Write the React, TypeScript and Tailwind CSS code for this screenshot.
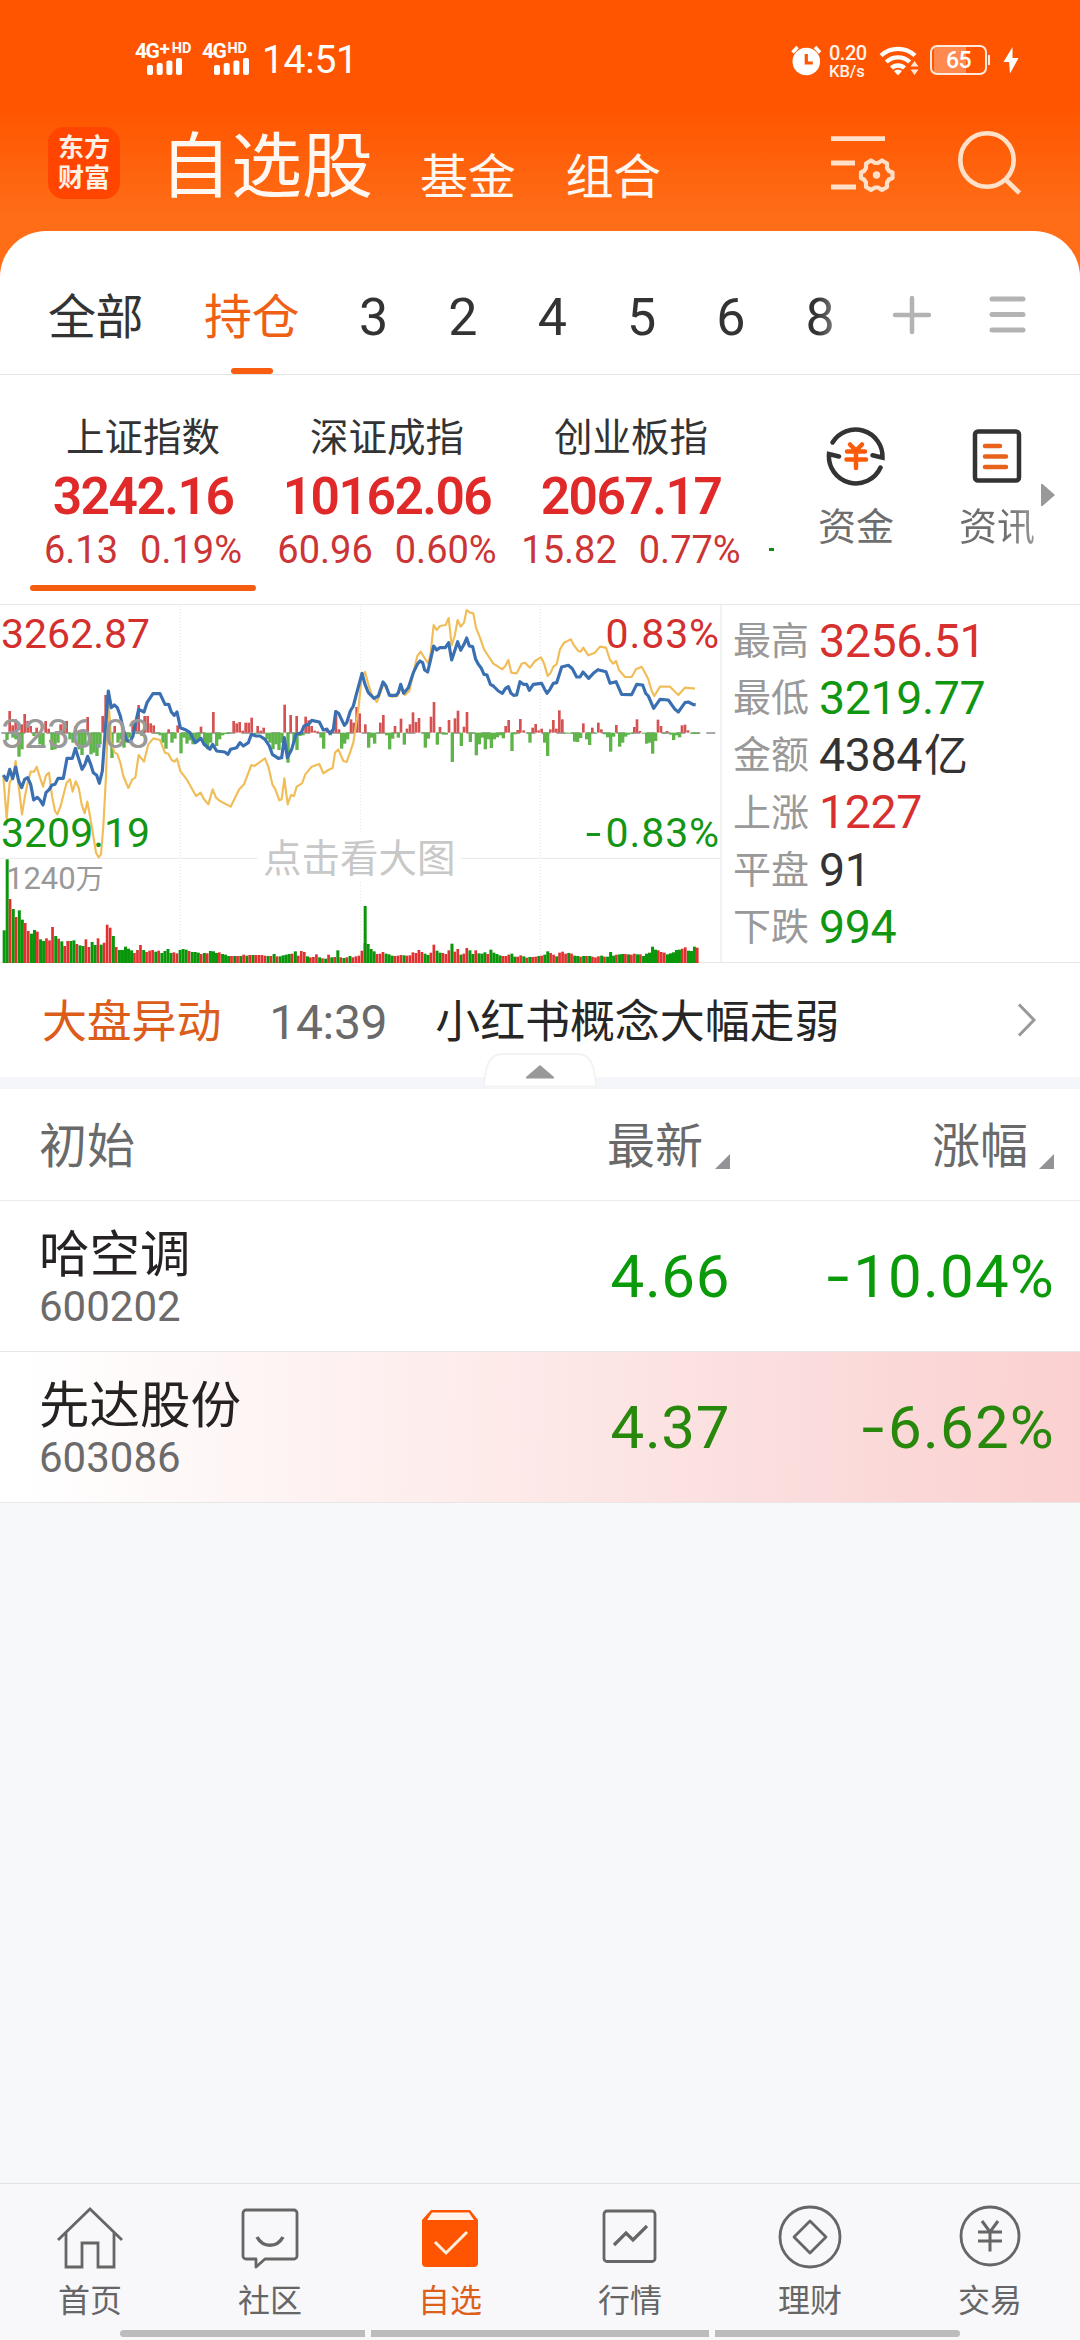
import React from "react";

type Pt = [number, number];

// Intraday chart space: 9 units per minute, price axis crosses at y = 410, volume base at y = 1101.
const INDEX_LINE: Pt[] = [
  [10, 537], [20, 553], [29, 520], [38, 548], [47, 513], [56, 555], [65, 575], [74, 550], [83, 545], [92, 565], [101, 612], [112, 604], [120, 612], [129, 627], [138, 590], [148, 580], [155, 568], [165, 565], [174, 547], [190, 547], [201, 487], [217, 487], [226, 457], [235, 485], [246, 520], [255, 505], [263, 481], [272, 505], [280, 530], [290, 538], [298, 562], [307, 525], [316, 400], [325, 285], [334, 335], [343, 327], [352, 335], [361, 360], [370, 400], [379, 432], [390, 437], [399, 420], [408, 375], [416, 340], [432, 348], [441, 320], [459, 293], [480, 293], [495, 325], [506, 325], [514, 348], [523, 358], [531, 348], [541, 395], [558, 402], [570, 410], [586, 440], [603, 427], [612, 445], [630, 460], [638, 445], [650, 465], [674, 468], [684, 475], [692, 460], [710, 455], [720, 440], [730, 450], [745, 440], [754, 415], [768, 420], [780, 420], [795, 430], [808, 450], [817, 475], [835, 487], [845, 485], [853, 425], [862, 485], [875, 460], [888, 415], [904, 410], [912, 390], [926, 385], [935, 373], [958, 378], [970, 402], [980, 400], [990, 412], [1000, 400], [1007, 347], [1016, 352], [1033, 388], [1040, 380], [1051, 345], [1060, 330], [1069, 295], [1086, 232],
  [1095, 265], [1105, 290], [1122, 307], [1135, 300], [1149, 258], [1158, 270], [1168, 298], [1188, 298], [1195, 290], [1202, 265], [1211, 292], [1225, 275], [1240, 230], [1252, 205], [1260, 195], [1268, 200], [1274, 222], [1283, 228], [1292, 190], [1301, 150], [1310, 162], [1320, 155], [1336, 155], [1346, 140], [1355, 192], [1364, 165], [1373, 137], [1382, 163], [1392, 145], [1400, 126], [1408, 150], [1418, 152], [1427, 190], [1435, 205], [1443, 215], [1452, 235], [1461, 237], [1471, 265], [1480, 270], [1495, 285], [1507, 292], [1516, 278], [1525, 272], [1533, 292], [1541, 298], [1550, 297], [1560, 257], [1570, 265], [1580, 265], [1588, 283], [1600, 265], [1625, 262], [1633, 278], [1641, 292], [1650, 280], [1660, 262], [1670, 260], [1685, 213], [1705, 208], [1717, 218], [1730, 243], [1740, 243], [1749, 228], [1766, 247], [1780, 232], [1794, 221], [1818, 227], [1830, 262], [1848, 257], [1865, 295], [1895, 296], [1910, 265], [1928, 267], [1937, 292], [1945, 300], [1961, 337], [1980, 310], [2005, 312], [2025, 340], [2035, 348], [2055, 320], [2065, 318], [2080, 326], [2087, 326],
];

const AVERAGE_LINE: Pt[] = [
  [10, 540], [20, 668], [29, 560], [38, 545], [47, 495], [56, 570], [66, 655], [75, 600], [83, 560], [92, 527], [103, 527], [110, 512], [120, 545], [129, 572], [138, 538], [147, 530], [156, 600], [165, 645], [172, 655], [182, 630], [192, 590], [200, 560], [210, 550], [218, 587], [227, 556], [236, 575], [245, 625], [254, 652], [262, 617], [270, 660], [280, 720], [288, 770], [296, 784], [303, 775], [310, 690], [318, 540], [325, 310], [334, 440], [343, 468], [352, 475], [361, 500], [370, 540], [385, 576], [397, 550], [406, 545], [416, 477], [432, 497], [445, 445], [460, 427], [480, 432], [495, 470], [505, 473], [515, 492], [523, 497], [531, 488], [541, 525], [560, 550], [588, 600], [602, 590], [612, 610], [625, 625], [638, 580], [648, 605], [660, 615], [692, 632], [705, 605], [718, 580], [732, 565], [754, 507], [763, 510], [795, 487], [806, 515], [817, 565], [826, 580], [838, 613], [845, 610], [853, 547], [863, 625], [873, 597], [882, 600], [890, 572], [906, 562], [916, 535], [935, 512], [958, 504], [970, 532], [985, 522], [998, 516], [1005, 470], [1015, 460], [1030, 495], [1040, 498], [1050, 470], [1060, 440], [1075, 340], [1085, 245],
  [1095, 228], [1105, 265], [1115, 295], [1130, 318], [1138, 300], [1152, 262], [1160, 280], [1175, 303], [1193, 300], [1202, 275], [1215, 297], [1228, 285], [1240, 230], [1252, 180], [1262, 167], [1270, 180], [1285, 203], [1292, 170], [1301, 87], [1310, 102], [1320, 90], [1337, 87], [1346, 66], [1355, 148], [1364, 120], [1373, 72], [1382, 92], [1392, 80], [1400, 42], [1410, 50], [1420, 52], [1428, 95], [1440, 125], [1452, 160], [1465, 180], [1480, 203], [1507, 220], [1516, 210], [1525, 192], [1534, 230], [1550, 232], [1565, 203], [1575, 200], [1590, 215], [1605, 195], [1623, 184], [1633, 205], [1643, 240], [1652, 230], [1660, 212], [1670, 205], [1680, 160], [1692, 140], [1713, 130], [1720, 145], [1735, 165], [1742, 167], [1750, 155], [1765, 178], [1785, 170], [1800, 152], [1818, 155], [1830, 192], [1840, 203], [1848, 195], [1857, 222], [1875, 243], [1895, 243], [1908, 220], [1925, 212], [1935, 230], [1945, 250], [1955, 285], [1963, 300], [1980, 272], [2010, 272], [2035, 297], [2055, 275], [2085, 278],
];

// [x, end y]; above 410 is buying pressure, below is selling pressure.
const FORCE: Pt[] = [
  [19, 432], [28, 345], [37, 425], [37, 388], [46, 370], [46, 430], [55, 482], [64, 460], [64, 385], [73, 354], [82, 375], [91, 390], [100, 420], [109, 395], [118, 445], [127, 450], [136, 375], [145, 398], [154, 462], [163, 460], [172, 440], [181, 385], [190, 380], [199, 375], [208, 430], [217, 440], [226, 390], [235, 460], [244, 477], [253, 450], [262, 363], [271, 475], [280, 470], [289, 480], [298, 445], [307, 360], [316, 297], [325, 300], [334, 486], [343, 390], [352, 440], [361, 430], [370, 455], [379, 440], [388, 425], [397, 375], [406, 375], [415, 327], [424, 420], [433, 360], [442, 360], [451, 382], [460, 388], [469, 413], [478, 418], [487, 440], [496, 458], [505, 400], [514, 440], [523, 428], [532, 388], [541, 472], [550, 425], [559, 443], [568, 433], [577, 445], [586, 440], [595, 432], [602, 392], [612, 450], [621, 460], [630, 440], [639, 348], [648, 450], [657, 430], [666, 418], [675, 414], [684, 414],
  [700, 375], [709, 382], [718, 378], [727, 404], [736, 380], [745, 380], [754, 365], [763, 415], [772, 390], [781, 404], [790, 395], [799, 430], [808, 440], [817, 460], [826, 445], [835, 462], [844, 440], [853, 326], [862, 500], [871, 357], [880, 440], [889, 360], [889, 462], [898, 420], [907, 418], [916, 362], [925, 373], [934, 390], [943, 404], [952, 406], [961, 425], [969, 458], [980, 395], [989, 418], [998, 400], [1007, 343], [1016, 400], [1023, 458], [1032, 443], [1041, 430], [1052, 370], [1060, 380], [1069, 333], [1078, 352], [1095, 385], [1104, 455], [1113, 425], [1122, 443], [1131, 412],
  [1140, 380], [1149, 357], [1158, 418], [1167, 460], [1176, 428], [1184, 390], [1193, 425], [1202, 368], [1211, 446], [1220, 398], [1229, 385], [1238, 349], [1247, 378], [1256, 366], [1265, 412], [1274, 455], [1283, 428], [1292, 362], [1301, 318], [1310, 446], [1319, 393], [1328, 416], [1337, 416], [1346, 372], [1355, 498], [1364, 367], [1373, 344], [1382, 450], [1391, 392], [1400, 348], [1409, 438], [1418, 412], [1427, 478], [1436, 445], [1445, 425], [1454, 460], [1463, 430], [1472, 456], [1481, 430], [1490, 424], [1499, 418], [1508, 427], [1516, 390], [1525, 372], [1534, 465], [1543, 415], [1552, 402], [1560, 369], [1570, 403], [1579, 412], [1588, 440], [1597, 395], [1606, 384], [1615, 403], [1624, 398], [1632, 440], [1641, 480], [1650, 400], [1659, 372], [1668, 398], [1677, 343], [1686, 370], [1695, 413], [1704, 413], [1713, 413], [1722, 437], [1731, 438], [1740, 426], [1749, 382], [1758, 430], [1767, 447], [1776, 395], [1785, 413], [1794, 380], [1803, 400], [1812, 415], [1821, 424], [1830, 467], [1839, 422], [1848, 387], [1857, 452], [1866, 440], [1875, 422], [1884, 416], [1893, 413], [1902, 393], [1910, 370], [1919, 405], [1928, 413], [1938, 443], [1947, 440], [1956, 473], [1965, 435], [1973, 371], [1982, 390], [1991, 413], [2000, 405], [2010, 416], [2019, 432], [2028, 418], [2037, 424], [2045, 388], [2054, 386], [2063, 403], [2072, 413], [2081, 414], [2090, 414],
];

// One entry per minute: r/g is the candle direction, the number is the bar height.
const VOLUME_MORNING =
  "g98 g311 r192 g162 r138 g158 g130 r120 r96 g88 g99 r94 g71 g66 r74 r68 r108 g81 r73 g65 r51 r66 g66 g68 r57 g53 g51 r71 r48 g63 g54 r74 g55 r61 r115 r106 g81 r48 g39 g39 g49 g43 g38 r30 r39 r54 g39 r33 r37 r39 g34 r37 g30 g36 g42 g30 r32 r29 g39 g42 g40 r36 g33 g33 g31 r27 g30 r29 g36 g35 g30 r32 g27 g25 g21 r21 g21 r21 g21 r25 g22 r24 g24 r24 r24 r24 r22 g21 r21 g27 r20 g20 g23 g25 g27 r28 g35 r22 r36 r33 g20 r17 r18 r26 g17 r14 g13 r25 g17 r18 g38 r17 g15 r17 g21 r17 r20 r22 r37 r60";

const VOLUME_AFTERNOON =
  "g171 g57 g42 g35 r27 r28 r33 g28 g26 g22 r21 r22 r24 g23 r22 r23 r32 r30 r39 r33 g28 g24 r31 r55 g37 g31 r30 r27 r38 g58 r34 r42 g25 r28 r45 g38 g27 r38 g29 g28 g32 r27 g40 g31 g27 g23 r21 r21 r25 g28 g19 r19 r23 g20 r16 g18 r18 r19 g21 r22 g25 g35 r30 r25 g20 r31 r34 r28 g30 r28 g22 g21 r19 g21 r21 g21 r19 r17 r20 g22 r19 g19 g33 g22 r25 g26 g27 r27 g26 r25 r28 g26 r26 g21 g28 g31 g49 g40 r38 r33 r31 g26 g29 g32 g39 g40 r43 r47 g37 g36 g49 r46";

const volumeBars = (data: string, start: number, step: number) =>
  data.split(" ").map((b, i) => ({ up: b[0] === "r", h: Number(b.slice(1)), x: start + i * step }));

const BARS = [...volumeBars(VOLUME_MORNING, 8, 9.1), ...volumeBars(VOLUME_AFTERNOON, 1091, 8.98)];

const toPoints = (p: Pt[]) => p.map(([x, y]) => `${x},${y}`).join(" ");

function Minus({ className }: { className: string }) {
  return <span className={`inline-block origin-right scale-x-[1.35] ${className}`}>-</span>;
}

function IntradayChart() {
  return (
    <div className="relative h-[358px] w-[720px] shrink-0">
      <svg className="block h-[358px] w-[720px]" viewBox="0 27 2160 1074">
        {[541, 1081, 1621].map((x) => (
          <line key={x} x1={x} x2={x} y1="30" y2="1101" stroke="#e2e2e2" strokeWidth="3" strokeDasharray="3 6" />
        ))}
        <line x1="0" x2="772" y1="787" y2="787" stroke="#e8e8e8" strokeWidth="3" />
        <line x1="1382" x2="2160" y1="787" y2="787" stroke="#e8e8e8" strokeWidth="3" />
        <rect x="780" y="712" width="590" height="145" fill="#fff" />
        {BARS.map((b, i) => (
          <rect key={i} x={b.x} y={1101 - b.h} width={b.up ? 8 : 9} height={b.h} fill={b.up ? "#e03030" : "#0a960a"} />
        ))}
        <line x1="4" x2="2160" y1="411" y2="411" stroke="#8c8c8c" strokeWidth="5" strokeDasharray="27 18" />
        {FORCE.map(([x, y], i) => (
          <rect
            key={i}
            x={x - 3}
            y={Math.min(y, 410)}
            width={y < 410 ? 8 : 10}
            height={Math.abs(y - 410)}
            fill={y < 410 ? "#d65252" : "#5fb44a"}
          />
        ))}
        <polyline points={toPoints(AVERAGE_LINE)} fill="none" stroke="#f0bd58" strokeWidth="6.5" strokeLinejoin="round" />
        <polyline points={toPoints(INDEX_LINE)} fill="none" stroke="#3a70b2" strokeWidth="9.5" strokeLinejoin="round" />
      </svg>
      <div className="absolute inset-0 text-[41px] leading-[40px]">
        <span className="absolute left-px top-[9px] text-[#d32f2f]">3262.87</span>
        <span className="absolute left-px top-[109px] text-[#999]">3236.03</span>
        <span className="absolute left-px top-[208px] text-[#149614]">3209.19</span>
        <span className="absolute right-0 top-[9px] tracking-[0.9px] text-[#d32f2f]">0.83%</span>
        <span className="absolute right-0 top-[208px] tracking-[0.9px] text-[#149614]">
          <Minus className="mr-[3px]" />
          0.83%
        </span>
        <span className="absolute left-[6px] top-[254px] text-[31px] text-[#999]">
          1240<span className="text-[28px]">万</span>
        </span>
        <span className="absolute left-[263px] top-[234px] text-[38.5px] text-[#c8c8c8]">点击看大图</span>
      </div>
    </div>
  );
}

function SignalBars() {
  return (
    <svg className="ml-[12px] mt-[-2px] block" width="36" height="17" viewBox="0 0 36 17" fill="#fff">
      <rect x="0" y="7" width="6" height="10" rx="2" />
      <rect x="9.7" y="5" width="6" height="12" rx="2" />
      <rect x="19.4" y="2.5" width="6" height="14.5" rx="2" />
      <rect x="29" y="0" width="6" height="17" rx="2" />
    </svg>
  );
}

function StatusBar() {
  return (
    <div className="flex h-[104px] items-start pt-[40px] text-white">
      <div className="ml-[135px] w-[67px]">
        <div className="flex h-[20px] items-start font-bold leading-[22px]">
          <span className="text-[21px] tracking-[-1.5px]">4G</span>
          <span className="ml-px text-[19px] leading-[18px]">+</span>
          <span className="ml-[2px] text-[14.5px] leading-[18px]">HD</span>
        </div>
        <SignalBars />
      </div>
      <div className="w-[60px]">
        <div className="flex h-[20px] items-start font-bold leading-[22px]">
          <span className="text-[21px] tracking-[-1.5px]">4G</span>
          <span className="ml-[2px] text-[14.5px] leading-[18px]">HD</span>
        </div>
        <SignalBars />
      </div>
      <span className="text-[39px] leading-[41px] tracking-[-0.3px]">14:51</span>
      <svg className="ml-auto mt-[4px]" width="31" height="32" viewBox="0 0 31 32">
        <circle cx="15.3" cy="17.5" r="13.8" fill="#fff" />
        <path d="M1.5 8.5 6.5 3M29 8.5 24 3" stroke="#fff" strokeWidth="3.4" />
        <path d="M15.3 10v9h6.5" fill="none" stroke="#ff5500" strokeWidth="3.2" />
      </svg>
      <div className="ml-[7px] mt-[3px] flex w-[50px] flex-col font-medium text-[#fff3ea]">
        <span className="text-[20px] leading-[20px] tracking-[-0.5px]">0.20</span>
        <span className="pt-[1px] text-[16.5px] leading-[15px]">KB/s</span>
      </div>
      <svg className="mt-[5px]" width="40" height="31" viewBox="0 0 40 31" fill="none" stroke="#fff" strokeWidth="4.4">
        <path d="M2 10.5a25 25 0 0 1 34 0" />
        <path d="M7.3 17a17 17 0 0 1 23.4 0" />
        <path d="M12.5 23a9.5 9.5 0 0 1 13 0" />
        <path d="M19 30.500l-4-4.500a6 6 0 0 1 8 0z" fill="#fff" stroke="none" />
        <path d="m35.500 16 4 5.500h-8zM35.500 30l4-5.500h-8z" fill="#ffe6d6" stroke="none" />
      </svg>
      <div className="ml-[11px] mt-[5px] flex h-[30px] w-[57px] items-center justify-center rounded-[7px] border-[2.5px] border-[#ffeadd] bg-[linear-gradient(90deg,transparent_2px,#ff8a50_2px,#ff8a50_34px,transparent_34px)] bg-origin-padding text-[23px] font-medium leading-none tracking-[-0.5px]">
        65
      </div>
      <i className="ml-px mt-[15px] h-[10px] w-[2px] bg-[#ffeadd]" />
      <svg className="ml-[13px] mr-[61px] mt-[7px]" width="16" height="27" viewBox="0 0 16 27" fill="#fff">
        <path d="M9.500 0 .5 15h5.500L7 26.500 15.500 11H9.500z" />
      </svg>
    </div>
  );
}

function TitleBar() {
  return (
    <div className="flex h-[127px] items-start text-[#fff8f2]">
      <div className="ml-[48px] mt-[23px] flex h-[72px] w-[72px] flex-col items-center rounded-[16px] bg-[#ff4500] pt-[6px] text-[26px] font-bold leading-[30px] text-[#fff0e6]">
        <span>东方</span>
        <span>财富</span>
      </div>
      <span className="ml-[40px] mt-[27px] w-[213px] text-[71px] leading-[72px]">自选股</span>
      <span className="ml-[47px] mt-[44px] text-[48px] leading-[60px] tracking-[-0.3px]">基金</span>
      <span className="ml-[50px] mt-[44px] text-[48px] leading-[60px] tracking-[-0.3px]">组合</span>
      <svg className="ml-[170px] mt-[30px]" width="64" height="66" viewBox="0 0 64 66" fill="none" stroke="#ffe0c8" strokeWidth="4.800">
        <path d="M0 4.700h54M0 29h24M0 53h25" />
        <path
          strokeLinejoin="round"
          strokeWidth="4.200"
          d="M40 26.500l4 2.500h3l4-2.500 5 3 0 4.500 2 3 3.500 1.500v5.500l-3.500 1.500-2 3 0 4.500-5 3-4-2.500h-3l-4 2.500-5-3 0-4.500-2-3-3-1.500v-5.500l3-1.500 2-3 0-4.500z"
        />
        <circle cx="45.500" cy="41" r="3.700" fill="#ffe0c8" stroke="none" />
      </svg>
      <svg className="ml-[63px] mt-[26px]" width="64" height="66" viewBox="0 0 64 66" fill="none" stroke="#ffe0c8" strokeWidth="4.600">
        <circle cx="29" cy="30" r="26.700" />
        <path d="m47 49 14.500 14" />
      </svg>
    </div>
  );
}

const GROUPS = ["3", "2", "4", "5", "6"];

function GroupTabs() {
  return (
    <div className="flex h-[144px] border-b border-[#e3e3e3] pt-[55px] text-[48px] leading-[64px] text-[#333]">
      <span className="ml-[48px] tracking-[-0.5px]">全部</span>
      <div className="ml-[61px] flex flex-col items-center text-[#ef6014]">
        <span className="tracking-[-0.5px]">持仓</span>
        <i className="mt-auto h-[6px] w-[42px] rounded-full bg-[#f95d0f]" />
      </div>
      <div className="ml-[30px] flex text-[52px]">
        {GROUPS.map((g) => (
          <span key={g} className="w-[89.3px] text-center">{g}</span>
        ))}
        <span className="w-[89px] text-center">
          <span className="bg-linear-to-r from-[#333] from-40% to-[#808080] bg-clip-text text-transparent">8</span>
        </span>
      </div>
      <svg className="ml-[27px] mt-[7px]" width="40" height="44" viewBox="0 0 40 44" stroke="#b3b3b3" strokeWidth="4.500" strokeLinecap="round">
        <path d="M3 22h34M20 5v34" />
      </svg>
      <svg className="ml-[57px] mt-[7px]" width="38" height="44" viewBox="0 0 38 44" stroke="#b3b3b3" strokeWidth="5" strokeLinecap="round">
        <path d="M3 6h31M3 21.500h31M3 37h31" />
      </svg>
    </div>
  );
}

const INDICES = [
  { name: "上证指数", value: "3242.16", diff: "6.13", pct: "0.19%", active: true },
  { name: "深证成指", value: "10162.06", diff: "60.96", pct: "0.60%", active: false },
  { name: "创业板指", value: "2067.17", diff: "15.82", pct: "0.77%", active: false },
];

function IndexStrip() {
  return (
    <div className="flex h-[229px] pt-[36px]">
      <div className="ml-[21px] flex">
        {INDICES.map((it) => (
          <div key={it.name} className="flex w-[244px] flex-col items-center whitespace-nowrap">
            <span className="text-[38.5px] leading-[54px] text-[#333]">{it.name}</span>
            <span className="mt-[5px] text-[51.5px] font-semibold leading-[54px] tracking-[-1.5px] text-[#e02a2a]">{it.value}</span>
            <span className="mt-[6px] flex gap-[22px] text-[38px] leading-[40px] text-[#cc3535]">
              <span>{it.diff}</span>
              <span>{it.pct}</span>
            </span>
            {it.active && <i className="mt-[15px] h-[6px] w-[226px] rounded-full bg-[#f45d10]" />}
          </div>
        ))}
      </div>
      <i className="ml-[16px] mt-[137px] h-[3px] w-[5px] bg-[#14891a]" />
      <div className="ml-[43px] flex w-[78px] flex-col items-center">
        <svg className="mt-[14px]" width="62" height="62" viewBox="0 0 62 62" fill="none" stroke="#333" strokeWidth="4.500">
          <path d="M7.500 17.500a27 27 0 0 1 50 15.200l-10-2.500" strokeLinecap="round" strokeLinejoin="miter" />
          <path d="M55.500 42.500A27 27 0 0 1 4 29l10 2.500" strokeLinecap="round" />
          <path d="m25 19.500 6 6 6-6M22 26.500h18M21.500 34.500h19.500M31 27v16" stroke="#fb5a0a" strokeLinecap="round" />
        </svg>
        <span className="mt-[15px] text-[38px] leading-[50px] text-[#6e6e6e]">资金</span>
      </div>
      <div className="ml-[63px] flex w-[78px] flex-col items-center">
        <svg className="mt-[14px]" width="62" height="62" viewBox="0 0 62 62" fill="none" stroke="#333" strokeWidth="4.500">
          <rect x="9" y="6.500" width="44" height="49" rx="3" />
          <path d="M19 21h15M19 31.500h21M19 42h21" stroke="#e8621c" strokeLinecap="round" />
        </svg>
        <span className="mt-[15px] bg-linear-to-r from-[#6e6e6e] from-60% to-[#999] bg-clip-text text-[38px] leading-[50px] text-transparent">资讯</span>
      </div>
      <svg className="ml-[5px] mt-[73px] shrink-0" width="15" height="22" viewBox="0 0 15 22" fill="#999">
        <path d="M0 0h1.500L14 11 1.500 22H0z" />
      </svg>
    </div>
  );
}

const STATS = [
  { label: "最高", value: "3256.51", tone: "text-[#d82f2f]" },
  { label: "最低", value: "3219.77", tone: "text-[#109610]" },
  { label: "金额", value: "4384", unit: "亿", tone: "text-[#333]" },
  { label: "上涨", value: "1227", tone: "text-[#d82f2f]" },
  { label: "平盘", value: "91", tone: "text-[#333]" },
  { label: "下跌", value: "994", tone: "text-[#109610]" },
];

function Stats() {
  return (
    <div className="flex flex-1 flex-col border-l-2 border-[#f2f2f2] pl-[11px] pt-[7.500px]">
      {STATS.map((s) => (
        <div key={s.label} className="flex h-[57.2px] items-center">
          <span className="w-[86px] text-[38px] leading-none text-[#999]">{s.label}</span>
          <span className={`text-[46.5px] leading-none tracking-[-0.4px] ${s.tone}`}>
            {s.value}
            {s.unit && <span className="ml-[2px] text-[44px]">{s.unit}</span>}
          </span>
        </div>
      ))}
    </div>
  );
}

function NewsRow() {
  return (
    <div className="flex h-[114px] pt-[30px] text-[45px] leading-[60px]">
      <span className="ml-[42px] tracking-[-0.2px] text-[#dc5c1a]">大盘异动</span>
      <span className="ml-[48px] text-[48px] tracking-[-0.3px] text-[#6a6a6a]">14:39</span>
      <span className="ml-[48px] tracking-[-0.1px] text-[#262626]">小红书概念大幅走弱</span>
      <svg className="ml-auto mr-[43px] mt-[10px]" width="20" height="34" viewBox="0 0 20 34" fill="none" stroke="#999" strokeWidth="3">
        <path d="m2 1.500 15 15.500L2 32.500" />
      </svg>
    </div>
  );
}

function CollapseStrip() {
  return (
    <div className="relative h-[12px] bg-[#f5f6fa]">
      <svg className="absolute left-[483px] top-[-24px]" width="114" height="36" viewBox="0 0 114 36">
        <path d="M1 33.500C2 22 3 12 8 6c3-4 7-5 12-5h74c5 0 9 1 12 5 5 6 6 16 7 27.500z" fill="#fff" stroke="#f3f3f3" strokeWidth="2" />
        <path d="M57 12 71 24v1.500H43V24z" fill="#999" />
      </svg>
    </div>
  );
}

function SortMark() {
  return (
    <svg className="mt-[35px]" width="15" height="15" viewBox="0 0 15 15" fill="#939397">
      <path d="M15 0v15H0z" />
    </svg>
  );
}

function ListHeader() {
  return (
    <div className="flex h-[112px] border-b border-[#ebebeb] pt-[30px] text-[48px] leading-[56px] text-[#6a6a6a]">
      <span className="ml-[39px] w-[568px]">初始</span>
      <span className="w-[108px]">最新</span>
      <SortMark />
      <span className="ml-[202px] w-[107px]">涨幅</span>
      <SortMark />
    </div>
  );
}

const STOCKS = [
  { name: "哈空调", code: "600202", price: "4.66", change: "10.04%", row: "bg-white", tone: "text-[#0a9a0a]" },
  {
    name: "先达股份",
    code: "603086",
    price: "4.37",
    change: "6.62%",
    row: "bg-[linear-gradient(91deg,#fff_2%,#fdebea_45%,#fbdcdc_75%,#fbd0d0_100%)]",
    tone: "text-[#27880c]",
  },
];

function StockRow({ stock }: { stock: (typeof STOCKS)[number] }) {
  return (
    <div className={`flex h-[151px] border-b border-[#ebe6e6] ${stock.row}`}>
      <div className="ml-[39px] flex w-[400px] flex-col pt-[24px]">
        <span className="text-[50.5px] leading-[60px] text-[#262222]">{stock.name}</span>
        <span className="mt-[2px] text-[42px] leading-[40px] text-[#6c6a6a]">{stock.code}</span>
      </div>
      <span className={`w-[291px] pt-[46px] text-right text-[60px] leading-[60px] tracking-[0.6px] ${stock.tone}`}>{stock.price}</span>
      <span className={`ml-auto mr-[25px] pt-[46px] text-[60px] leading-[60px] tracking-[1.2px] ${stock.tone}`}>
        <Minus className="mr-[2px]" />
        {stock.change}
      </span>
    </div>
  );
}

const NAV = [
  {
    label: "首页",
    icon: <path d="M4 35 36 4l32 31M12 28v34h16V38h16v24h16V28" />,
  },
  {
    label: "社区",
    icon: (
      <>
        <path d="M12 5h48a3 3 0 0 1 3 3v43a3 3 0 0 1-3 3H31l-9 8v-8H12a3 3 0 0 1-3-3V8a3 3 0 0 1 3-3z" strokeLinejoin="round" />
        <path d="M23 32c6 11 20 11 26 0" strokeWidth="3.500" />
      </>
    ),
  },
  {
    label: "自选",
    active: true,
    icon: (
      <>
        <path d="M17 5h39l8 10v43a4 4 0 0 1-4 4H12a4 4 0 0 1-4-4V15z" fill="#ff5500" stroke="none" />
        <path d="M18 7.500h37l5 7.500H13z" fill="#fff3ea" stroke="none" />
        <path d="m21 37 11 11 21-21" stroke="#ffeedd" strokeWidth="3" />
      </>
    ),
  },
  {
    label: "行情",
    icon: (
      <>
        <rect x="10" y="6" width="51" height="50.500" rx="3" />
        <path d="m20 40 12-12 7 7 14-14" strokeWidth="3.200" />
      </>
    ),
  },
  {
    label: "理财",
    icon: (
      <>
        <circle cx="36" cy="32" r="30" />
        <path d="m36 16 16 16-16 16-16-16z" strokeLinejoin="round" />
      </>
    ),
  },
  {
    label: "交易",
    icon: (
      <>
        <circle cx="36" cy="31" r="29" />
        <path d="m28 16 8 11 8-11M24 27h24M24 36h24M36 27v19.500" strokeWidth="3" />
      </>
    ),
  },
];

function BottomNav() {
  return (
    <div className="relative flex h-[157px] border-t border-[#e3e3e3] bg-[#f8f8fb]">
      {NAV.map((n) => (
        <div key={n.label} className="flex w-[180px] flex-col items-center pt-[21px]">
          <svg width="72" height="68" viewBox="0 0 72 68" fill="none" stroke="#666" strokeWidth="2.800">
            {n.icon}
          </svg>
          <span className={`mt-[8px] text-[32px] leading-[40px] ${n.active ? "text-[#dd5f1c]" : "text-[#666]"}`}>{n.label}</span>
        </div>
      ))}
      <div className="absolute bottom-[3px] left-[120px] flex h-[7px] gap-[6px]">
        <i className="w-[245px] rounded-l-full bg-[#bcbcbc]" />
        <i className="w-[338px] bg-[#bcbcbc]" />
        <i className="w-[245px] rounded-r-full bg-[#bcbcbc]" />
      </div>
    </div>
  );
}

export default function App() {
  return (
    <div className="relative flex h-[2340px] w-[1080px] flex-col overflow-hidden bg-[#f7f8fa] font-[Roboto,'Noto_Sans_CJK_SC',sans-serif]">
      <div className="bg-[linear-gradient(180deg,#ff5500_108px,#ff6d17_215px,#ff6d17_300px)]">
        <StatusBar />
        <TitleBar />
        <div className="rounded-t-[46px] bg-white">
          <GroupTabs />
          <IndexStrip />
          <div className="flex h-[359px] border-y border-[#e8e8e8]">
            <IntradayChart />
            <Stats />
          </div>
          <NewsRow />
          <CollapseStrip />
          <ListHeader />
          {STOCKS.map((s) => (
            <StockRow key={s.code} stock={s} />
          ))}
        </div>
      </div>
      <div className="flex-1" />
      <BottomNav />
    </div>
  );
}
